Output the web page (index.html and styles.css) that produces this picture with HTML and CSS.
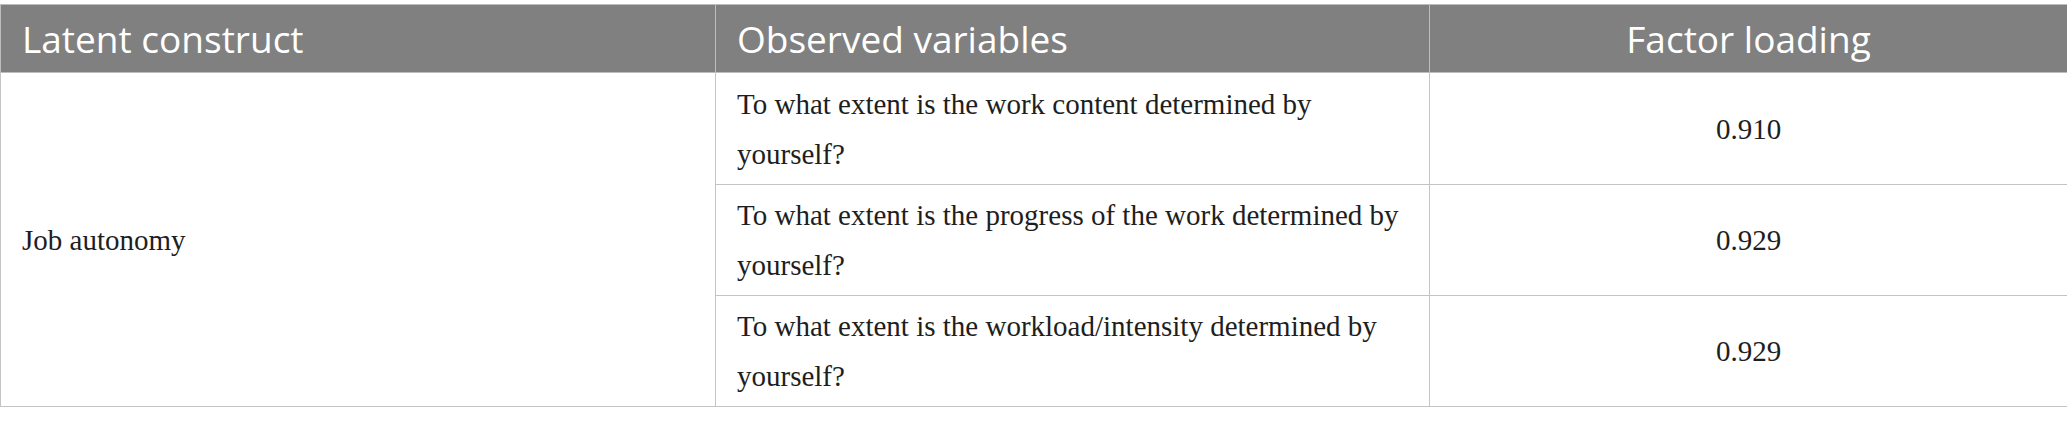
FILE: index.html
```html
<!DOCTYPE html>
<html lang="en">
<head>
<meta charset="utf-8">
<title>Factor loadings</title>
<link rel="stylesheet" href="styles.css">
</head>
<body>
<div class="wrap">
<table class="data">
<colgroup>
<col class="c1">
<col class="c2">
<col class="c3">
</colgroup>
<thead>
<tr>
<th class="left">Latent construct</th>
<th class="left">Observed variables</th>
<th class="center">Factor loading</th>
</tr>
</thead>
<tbody>
<tr>
<td rowspan="3" class="left">Job autonomy</td>
<td class="left">To what extent is the work content determined by yourself?</td>
<td class="center">0.910</td>
</tr>
<tr>
<td class="left">To what extent is the progress of the work determined by yourself?</td>
<td class="center">0.929</td>
</tr>
<tr>
<td class="left">To what extent is the workload/intensity determined by yourself?</td>
<td class="center">0.929</td>
</tr>
</tbody>
</table>
</div>
</body>
</html>
```

FILE: styles.css
```css
html, body {
  margin: 0;
  padding: 0;
  background: #ffffff;
}

.wrap {
  padding-top: 4px;
}

.data {
  border-collapse: collapse;
  table-layout: fixed;
  width: 2067px;
}

.c1 { width: 715px; }
.c2 { width: 714px; }
.c3 { width: 638px; }

.data th {
  background: #7f807f;
  color: #ffffff;
  font-family: "Open Sans", "Liberation Sans", sans-serif;
  font-weight: 400;
  font-size: 37px;
  line-height: 50px;
  padding: 9px 21px 8px 21px;
  border: 1px solid #bdbdbd;
  vertical-align: middle;
}

.data td {
  font-family: "Liberation Serif", "Times New Roman", serif;
  font-size: 29px;
  line-height: 50px;
  color: #1e1e1e;
  padding: 5px 21px 5px 21px;
  border: 1px solid #c4c4c4;
  vertical-align: middle;
}

.data tbody tr:first-child td {
  padding-top: 6px;
}

.left { text-align: left; }
.center { text-align: center; }
```
